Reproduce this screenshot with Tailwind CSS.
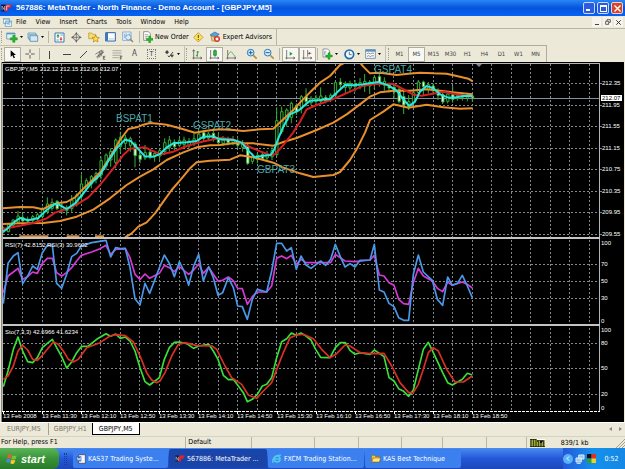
<!DOCTYPE html>
<html lang="en">
<head>
    <meta charset="UTF-8">
    <meta name="viewport" content="width=device-width, initial-scale=1.0">
    <title>567886: MetaTrader - North Finance</title>
    <script src="https://cdn.jsdelivr.net/npm/@tailwindcss/browser@4"></script>
</head>
<body class="flex min-h-screen flex-col bg-[#ece9d8] font-['DejaVu_Sans_Condensed','Liberation_Sans',sans-serif] text-[7px] leading-[10px] text-black">

    <!-- Title bar -->
    <header class="flex h-4 items-center gap-1 bg-linear-to-b from-[#2a86f5] via-[#0453dc] to-[#0564f5] pr-[2px] pl-px font-['Liberation_Sans',sans-serif]">
        <svg class="h-2 w-[11px]" viewBox="0 0 33 24"><path fill="#101038" d="M0 2h14v20H0z"/><path fill="#e02030" d="M14 2h19l-5 10h-6l-3 10h-8z"/><path stroke="#8ab" stroke-width="3" d="M3 19V6l8 13V6" fill="none"/><path stroke="#fff" stroke-width="2" d="M17 19V6h9" fill="none"/></svg>
        <h1 class="flex-1 text-[8px] font-bold text-white">567886: MetaTrader - North Finance - Demo Account - [GBPJPY,M5]</h1>
        <div class="flex gap-[2px]">
            <button aria-label="Minimize" class="flex h-3 w-3 items-end justify-start rounded-[2px] border border-[#c8d8fa] bg-[#2a5be0] p-[2px]"><span class="h-[2px] w-1 bg-white"></span></button>
            <button aria-label="Maximize" class="flex h-3 w-3 items-center justify-center rounded-[2px] border border-[#c8d8fa] bg-[#2a5be0]"><span class="h-[7px] w-[7px] border border-t-2 border-white"></span></button>
            <button aria-label="Close" class="flex h-3 w-3 items-center justify-center rounded-[2px] border border-[#f0d0c8] bg-[#d8452a]"><svg class="h-[7px] w-[7px]" viewBox="0 0 7 7"><path d="M0.5 0.5l6 6M6.5 0.5l-6 6" stroke="#fff" stroke-width="1.4"/></svg></button>
        </div>
    </header>

    <!-- Menu -->
    <nav class="flex h-[13px] items-center border-b border-[#b9b6a6] pr-[2px] pl-[3px]">
        <svg class="mr-1 h-[9px] w-[9px]" viewBox="0 0 27 27"><path fill="#fff" stroke="#4a86b8" stroke-width="2" d="M1 1h18v15H1zM7 9h19v16H7z"/><path stroke="#3aa0c8" stroke-width="2" fill="none" d="M1 4h18M7 12h19M11 20l4-3 4 3 4-3"/></svg>
        <div class="flex flex-1 gap-[9px]">
            <a href="#">File</a>
            <a href="#">View</a>
            <a href="#">Insert</a>
            <a href="#">Charts</a>
            <a href="#">Tools</a>
            <a href="#">Window</a>
            <a href="#">Help</a>
        </div>
        <div class="flex gap-[2px]">
            <button aria-label="Minimize chart" class="flex h-[10px] w-[9px] items-end justify-center bg-[#f6f4ec] pb-[2px]"><span class="h-px w-1 bg-[#444]"></span></button>
            <button aria-label="Restore chart" class="flex h-[10px] w-[9px] items-center justify-center bg-[#f6f4ec]"><svg class="h-[6px] w-[6px]" viewBox="0 0 18 18"><path fill="none" stroke="#444" stroke-width="2.5" d="M6 6V2h10v8h-4M2 7h9v9H2z"/></svg></button>
            <button aria-label="Close chart" class="flex h-[10px] w-[9px] items-center justify-center bg-[#f6f4ec]"><svg class="h-[5px] w-[5px]" viewBox="0 0 15 15"><path stroke="#333" stroke-width="3" d="M1 1l13 13M14 1L1 14"/></svg></button>
        </div>
    </nav>

    <!-- Standard toolbar -->
    <div class="flex h-4 items-center">
        <div class="flex h-4 items-center border-r border-[#b9b6a6] pr-1">
            <span class="mx-px h-3 w-[2px] border-l border-dotted border-[#999]"></span>
            <button aria-label="New chart" class="flex w-[21px] items-center justify-center gap-[2px]"><svg class="h-[11px] w-[12px]" viewBox="0 0 36 33"><path fill="#dff0f8" stroke="#4a86a8" stroke-width="2" d="M2 3h25v18H2z"/><path fill="#5a9ab8" d="M2 3h25v4H2z"/><path fill="#28b428" stroke="#0a7a14" d="M20 10h7v7h7v7h-7v7h-7v-7h-7v-7h7z"/></svg><svg class="h-[2px] w-[3px]" viewBox="0 0 6 4"><path d="M0 0h6L3 4z"/></svg></button>
            <button aria-label="Profiles" class="flex w-[21px] items-center justify-center gap-[2px]"><svg class="h-[11px] w-[12px]" viewBox="0 0 36 33"><path fill="#eaf4fa" stroke="#4a86b0" stroke-width="2" d="M3 3h23v16H3z"/><path fill="#eaf4fa" stroke="#4a86b0" stroke-width="2" d="M6 7h23v16H6z"/><path fill="#d6e8f4" stroke="#3a76a8" stroke-width="2" d="M9 11h23v17H9z"/></svg><svg class="h-[2px] w-[3px]" viewBox="0 0 6 4"><path d="M0 0h6L3 4z"/></svg></button>
            <span class="mx-[2px] h-3 w-px bg-[#b9b6a6]"></span>
            <button aria-label="Market Watch" class="flex w-[17px] justify-center"><svg class="h-[11px] w-[11px]" viewBox="0 0 33 33"><path fill="#fff" stroke="#3a78b4" stroke-width="3" d="M3 3h27v27H3z"/><path fill="#2a9a3a" d="M7 13l5-7 5 7h-3v4h-4v-4z"/><path fill="#e04030" d="M16 20l5 7 5-7h-3v-4h-4v4z"/><path stroke="#3a78b4" stroke-width="2" d="M19 9h8M7 24h8"/></svg></button>
            <button aria-label="Data window" class="flex w-[17px] justify-center"><svg class="h-[11px] w-[11px]" viewBox="0 0 33 33"><circle cx="16" cy="16" r="9" fill="none" stroke="#555" stroke-width="2"/><path fill="#555" d="M16 0l4 7h-8zM16 32l4-7h-8zM0 16l7-4v8zM32 16l-7-4v8z"/><path stroke="#555" stroke-width="2" d="M16 9v14M9 16h14"/></svg></button>
            <button aria-label="Navigator" class="flex w-[17px] justify-center"><svg class="h-[12px] w-[12px]" viewBox="0 0 36 36"><path fill="#f7dc6a" stroke="#b89030" stroke-width="2" d="M2 6h9l3 4h9v13H2z"/><path fill="#ffe050" stroke="#b07a10" stroke-width="2" d="M23 12l3 7 8 1-6 5 2 8-7-4-7 4 2-8-6-5 8-1z"/></svg></button>
            <button aria-label="Terminal" class="flex w-[17px] justify-center"><svg class="h-[10px] w-[11px]" viewBox="0 0 33 30"><path fill="#fff" stroke="#2a60a8" stroke-width="3" d="M2 2h29v25H2z"/><path fill="#3a78c0" d="M3 3h6v23H3z"/><path stroke="#a8c8e4" stroke-width="2" d="M12 20h16M12 24h16"/></svg></button>
            <button aria-label="Tester" class="flex w-[17px] justify-center"><svg class="h-[12px] w-[12px]" viewBox="0 0 36 36"><path fill="#f4f8fc" stroke="#5a90c0" stroke-width="2" d="M2 3h25v25H2z"/><path stroke="#5a90c0" stroke-width="2" d="M7 8v14M12 6v12M22 7v7"/><circle cx="19" cy="19" r="8" fill="#d8ecfa" stroke="#4a80b0" stroke-width="2"/><path stroke="#a08048" stroke-width="4" d="M25 25l8 8"/></svg></button>
            <span class="mx-[3px] h-3 w-px bg-[#b9b6a6]"></span>
            <button class="flex items-center gap-[2px]"><svg class="h-3 w-[10px]" viewBox="0 0 30 36"><path fill="#fff" stroke="#666" stroke-width="2" d="M2 2h14l6 6v20H2z"/><path stroke="#888" stroke-width="2" d="M6 11h10M6 16h10M6 21h6"/><path fill="#28b428" stroke="#0a7a14" d="M17 15h6v7h7v6h-7v7h-6v-7h-7v-6h7z"/></svg>New Order</button>
            <button aria-label="Alert" class="flex w-5 justify-center"><svg class="h-[11px] w-[11px]" viewBox="0 0 33 33"><path fill="#ffe054" stroke="#a88020" stroke-width="2" d="M16 2l14 14-14 14L2 16z"/><path stroke="#604800" stroke-width="3" d="M16 9v9M16 21v3"/></svg></button>
            <button class="flex items-center gap-[2px]"><svg class="h-3 w-3" viewBox="0 0 36 36"><path fill="#5aa4d8" stroke="#2a6a9a" stroke-width="2" d="M3 12L17 3l14 7-13 8z"/><path fill="#f0c880" stroke="#a87830" stroke-width="2" d="M6 15l12 4 6-3v14H9z"/><circle cx="24" cy="24" r="9" fill="#d83020"/><path fill="#fff" d="M20 20h8v8h-8z"/></svg>Expert Advisors</button>
        </div>
    </div>

    <!-- Line studies, charts and periods toolbar -->
    <div class="flex h-[17px] items-center">
        <div class="flex h-[17px] items-center border-t border-r border-[#c4c1b1] pr-px">
            <span class="mx-px h-3 w-[2px] border-l border-dotted border-[#999]"></span>
            <button aria-label="Cursor" class="flex h-[15px] w-[17px] items-center justify-center border border-[#b0ad9e] bg-[#f8f7f2]"><svg class="h-[9px] w-[6px]" viewBox="0 0 18 27"><path d="M2 1v20l5-5 4 9 4-2-4-8h7z"/></svg></button>
            <button aria-label="Crosshair" class="flex w-[17px] justify-center"><svg class="h-[10px] w-[10px]" viewBox="0 0 30 30"><path stroke="#444" stroke-width="2.5" d="M15 1v11M15 18v11M1 15h11M18 15h11"/></svg></button>
            <span class="mx-px h-3 w-px bg-[#b9b6a6]"></span>
            <button aria-label="Vertical line" class="flex w-[17px] justify-center"><svg class="h-[9px] w-[9px]" viewBox="0 0 9 9"><path stroke="#444" d="M4.5 1v8"/></svg></button>
            <button aria-label="Horizontal line" class="flex w-[17px] justify-center"><svg class="h-[9px] w-[9px]" viewBox="0 0 9 9"><path stroke="#444" d="M1 4.5h8"/></svg></button>
            <button aria-label="Trendline" class="flex w-[17px] justify-center"><svg class="h-[9px] w-[9px]" viewBox="0 0 9 9"><path stroke="#444" d="M1 8l7-7"/></svg></button>
            <button aria-label="Channel" class="flex w-[17px] justify-center"><svg class="h-[11px] w-[11px]" viewBox="0 0 33 33"><path stroke="#444" stroke-width="2" fill="none" d="M1 16L21 3M4 24L27 9M8 28L15 7M13 25l7-20M18 22l6-18M25 21v10M25 22h6M25 26h5M25 31h6"/></svg></button>
            <button aria-label="Fibonacci" class="flex w-[17px] justify-center"><svg class="h-[11px] w-[11px]" viewBox="0 0 33 33"><path stroke="#555" stroke-width="2" stroke-dasharray="2 1" d="M2 5h26M2 12h26M2 19h26M2 26h19"/><path stroke="#333" stroke-width="2" fill="none" d="M25 32V22h6M25 27h5"/></svg></button>
            <button class="flex w-[17px] justify-center text-[8px] text-[#444]">A</button>
            <button class="flex w-[17px] justify-center"><span class="flex h-[10px] w-[9px] items-center justify-center border border-dotted border-[#777] text-[#444]">T</span></button>
            <button aria-label="Arrows" class="flex w-[23px] items-center justify-center gap-[2px]"><svg class="h-[10px] w-[11px]" viewBox="0 0 33 30"><path fill="#444" d="M9 3l6 7-6 6-6-6z"/><path fill="#444" d="M18 17h12l-6 9z"/><path fill="none" stroke="#444" stroke-width="3" d="M12 20l3 4 12-15"/></svg><svg class="h-[2px] w-[3px]" viewBox="0 0 6 4"><path d="M0 0h6L3 4z"/></svg></button>
        </div>
        <div class="flex h-[17px] items-center border-t border-r border-[#c4c1b1] pr-px">
            <span class="mx-px h-3 w-[2px] border-l border-dotted border-[#999]"></span>
            <button aria-label="Bar chart" class="flex w-[17px] justify-center"><svg class="h-[11px] w-[11px]" viewBox="0 0 33 33"><path stroke="#444" stroke-width="2" fill="none" d="M5 3v28M1 27h28M25 24l5 3-5 3M2 7l3-5 3 5"/><path stroke="#2a9a3a" stroke-width="3" fill="none" d="M16 6v17M12 20h4M16 9h5"/></svg></button>
            <button aria-label="Candlesticks" class="flex h-[15px] w-[17px] items-center justify-center border border-[#b0ad9e] bg-[#f8f7f2]"><svg class="h-[11px] w-[11px]" viewBox="0 0 33 33"><path stroke="#444" stroke-width="2" fill="none" d="M5 3v28M1 27h28M25 24l5 3-5 3"/><path stroke="#107020" stroke-width="2" d="M18 1v24"/><path fill="#2ac040" stroke="#107020" stroke-width="2" d="M14 5h8v14h-8z"/></svg></button>
            <button aria-label="Line chart" class="flex w-[17px] justify-center"><svg class="h-[11px] w-[11px]" viewBox="0 0 33 33"><path stroke="#444" stroke-width="2" fill="none" d="M5 3v28M1 27h28M25 24l5 3-5 3"/><path stroke="#2a9a3a" stroke-width="2" fill="none" d="M6 19C12 6 16 6 20 13s5 8 9 9"/></svg></button>
            <span class="w-[3px]"></span>
            <button aria-label="Zoom in" class="flex w-[17px] justify-center"><svg class="h-[12px] w-[12px]" viewBox="0 0 36 36"><path stroke="#c09030" stroke-width="5" d="M22 22l10 10"/><circle cx="14" cy="14" r="10" fill="#d4ecfc" stroke="#2a78b8" stroke-width="3"/><path stroke="#1a60a0" stroke-width="3" d="M14 8v12M8 14h12"/></svg></button>
            <button aria-label="Zoom out" class="flex w-[17px] justify-center"><svg class="h-[12px] w-[12px]" viewBox="0 0 36 36"><path stroke="#c09030" stroke-width="5" d="M22 22l10 10"/><circle cx="14" cy="14" r="10" fill="#d4ecfc" stroke="#2a78b8" stroke-width="3"/><path stroke="#1a60a0" stroke-width="3" d="M8 14h12"/></svg></button>
            <span class="mx-[2px] h-3 w-px bg-[#b9b6a6]"></span>
            <button aria-label="Auto scroll" class="flex h-[15px] w-[17px] items-center justify-center border border-[#b0ad9e] bg-[#f8f7f2]"><svg class="h-[11px] w-[11px]" viewBox="0 0 33 33"><path stroke="#444" stroke-width="2" fill="none" d="M5 3v28M1 27h28M25 24l5 3-5 3"/><path fill="#2a9a3a" d="M14 8l9 6-9 6z"/></svg></button>
            <button aria-label="Chart shift" class="flex h-[15px] w-[17px] items-center justify-center border border-[#b0ad9e] bg-[#f8f7f2]"><svg class="h-[11px] w-[11px]" viewBox="0 0 33 33"><path stroke="#444" stroke-width="2" fill="none" d="M5 3v28M1 27h28M25 24l5 3-5 3M17 3v20M19 13h9"/><path fill="#b03020" d="M18 13l6-4v8z"/></svg></button>
            <span class="mx-px h-3 w-px bg-[#b9b6a6]"></span>
            <button aria-label="Indicators" class="flex w-[22px] items-center justify-center gap-[2px]"><svg class="h-[12px] w-[11px]" viewBox="0 0 33 36"><path fill="#fff" stroke="#666" stroke-width="2" d="M3 3h14l6 6v18H3z"/><path stroke="#5a90c0" stroke-width="2" fill="none" d="M8 22V10h5M7 15h6"/><path fill="#28b428" stroke="#0a7a14" d="M18 14h6v7h7v6h-7v7h-6v-7h-7v-6h7z"/></svg><svg class="h-[2px] w-[3px]" viewBox="0 0 6 4"><path d="M0 0h6L3 4z"/></svg></button>
            <button aria-label="Periods" class="flex w-[21px] items-center justify-center gap-[2px]"><svg class="h-[11px] w-[11px]" viewBox="0 0 33 33"><circle cx="16" cy="16" r="13" fill="#eef8ff" stroke="#2068a8" stroke-width="5"/><path stroke="#234" stroke-width="2" fill="none" d="M16 8v9h7"/></svg><svg class="h-[2px] w-[3px]" viewBox="0 0 6 4"><path d="M0 0h6L3 4z"/></svg></button>
            <button aria-label="Templates" class="flex w-[22px] items-center justify-center gap-[2px]"><svg class="h-[10px] w-[11px]" viewBox="0 0 33 30"><path fill="#fff" stroke="#3a6a98" stroke-width="2" d="M2 2h29v26H2z"/><path fill="#5a90c0" d="M2 2h29v6H2z"/><path stroke="#555" stroke-width="2" fill="none" d="M6 14l5-2 5 3 5-3 6 1M6 22l5-2 5 3 5-3 6 1"/></svg><svg class="h-[2px] w-[3px]" viewBox="0 0 6 4"><path d="M0 0h6L3 4z"/></svg></button>
        </div>
        <div class="flex h-[17px] items-center border-t border-r border-[#b0ad9e] pr-[2px] pl-px text-[6px] text-[#444]">
            <span class="mx-px h-3 w-[2px] border-l border-dotted border-[#999]"></span>
            <button class="w-[17px]">M1</button>
            <button class="h-[15px] w-[17px] border border-[#b0ad9e] bg-[#f8f7f2]">M5</button>
            <button class="w-[17px]">M15</button>
            <button class="w-[17px]">M30</button>
            <button class="w-[17px]">H1</button>
            <button class="w-[17px]">H4</button>
            <button class="w-[17px]">D1</button>
            <button class="w-[17px]">W1</button>
            <button class="w-[17px]">MN</button>
        </div>
    </div>

    <!-- Chart window: price, RSI and stochastic -->
    <main class="border-b border-[#fff]">
        <svg class="block w-full" viewBox="0 62 625 360" font-family="'Liberation Sans',sans-serif" font-size="6" fill="#fff">
            <path fill="#8e8c80" d="M0 62h625v360H0z"/>
            <path fill="#ece9d8" d="M0 62h1v360H0zM624 62h1v360h-1z"/>
            <path fill="#000" d="M2 62h622v360H2z"/>
            <g id="grid" stroke="#808890" stroke-dasharray="2 2" shape-rendering="crispEdges"></g>
            <path stroke="#8090a0" d="M3 98.5h597"/>

            <svg x="0" y="60" width="625" height="180" viewBox="0 0 1875 540" fill="none" stroke-linejoin="round">
                <g id="candles" stroke="#35b135" stroke-width="3"></g>
                <g id="price" stroke-width="6"></g>
            </svg>
            <svg x="0" y="236" width="625" height="186" viewBox="0 0 1875 558" fill="none" stroke-linejoin="round">
                <g id="oscillators" stroke-width="5"></g>
            </svg>

            <path fill="#000" d="M2 62h622v1H2z"/>
            <path fill="none" stroke="#b4b4b4" shape-rendering="crispEdges" d="M2.5 63.5H600M2.5 63v349M599.5 63v349"/>
            <path fill="#c4c4c4" d="M2 237h598v2H2zM2 324h598v2H2z"/>
            <path fill="none" stroke="#fff" stroke-dasharray="3 1" shape-rendering="crispEdges" d="M2 411.5h598"/>
            <path fill="#808890" d="M476 64h6l-3 3z"/>

            <g font-size="10" fill="#4aa8a8">
                <text x="116" y="122">BSPAT1</text>
                <text x="193" y="129">GSPAT2</text>
                <text x="257" y="173">GBPAT3</text>
                <text x="374" y="73">GSPAT4</text>
            </g>
            <text x="5" y="71">GBPJPY,M5</text>
            <text x="40" y="71">212.12 212.15 212.06 212.07</text>
            <text x="5" y="247">RSI(7) 42.8152</text>
            <text x="47" y="247">RSI(3) 30.9602</text>
            <text x="5" y="334">Sto(7,3,3) 42.6966 41.6234</text>
            <g id="labels"></g>
            <path d="M601 95h21v6h-21z"/>
            <text x="602" y="100" fill="#000">212.07</text>
        </svg>
    </main>

    <!-- Chart tabs -->
    <div class="flex h-[13px] items-start text-[#77756a]">
        <button class="h-3 border-r border-[#a5a294] px-[7px] leading-[10px]">EURJPY,M5</button>
        <button class="h-3 px-[5px] leading-[10px]">GBPJPY,H1</button>
        <button class="h-3 border border-t-0 border-black bg-white px-[6px] leading-[10px] text-black">GBPJPY,M5</button>
        <span class="flex-1"></span>
        <button aria-label="Scroll tabs left" class="h-3 w-[10px]"><svg class="mx-auto h-[4px] w-[3px]" viewBox="0 0 3 4"><path fill="#888" d="M3 0v4L0 2z"/></svg></button>
        <button aria-label="Scroll tabs right" class="h-3 w-[10px]"><svg class="mx-auto h-[4px] w-[3px]" viewBox="0 0 3 4"><path fill="#888" d="M0 0v4l3-2z"/></svg></button>
    </div>

    <!-- Status bar -->
    <footer class="grid h-3 grid-cols-[185fr_66fr_62fr_44fr_43fr_41fr_44fr_40fr_99fr] border-t border-[#d6d3c3] leading-[10px] whitespace-nowrap">
        <span class="pl-px">For Help, press F1</span>
        <span class="border-l border-[#b9b6a6] pl-[2px]">Default</span>
        <span class="border-l border-[#b9b6a6]"></span>
        <span class="border-l border-[#b9b6a6]"></span>
        <span class="border-l border-[#b9b6a6]"></span>
        <span class="border-l border-[#b9b6a6]"></span>
        <span class="border-l border-[#b9b6a6]"></span>
        <span class="border-l border-[#b9b6a6]"></span>
        <span class="flex items-center border-l border-[#b9b6a6] pl-[3px]">
            <svg class="h-2 w-[15px]" viewBox="0 0 45 24"><path fill="#111" d="M0 0h45v24H0z"/><path stroke="#b8c83c" stroke-width="3" d="M3 2v20M8 2v20M13 2v20M18 2v20M23 8v14M28 5v17M33 12v10M38 8v14M43 3v19"/><path stroke="#fff" stroke-width="5" d="M20 1h25"/></svg>
            <span class="ml-4 flex-1">839/1 kb</span>
            <svg class="h-[9px] w-[9px] self-end" viewBox="0 0 9 9"><path stroke="#a5a294" d="M0 9l9-9M3 9l6-6M6 9l3-3"/></svg>
        </span>
    </footer>

    <!-- Windows taskbar -->
    <div class="flex min-h-[21px] flex-1 items-stretch bg-linear-to-b from-[#4a8cf0] via-[#2458d8] to-[#1c48b8] text-white">
        <button class="mr-[5px] flex w-[59px] items-center gap-[3px] rounded-r-[6px] bg-linear-to-b from-[#5cb45a] via-[#379335] to-[#2b7a2b] pl-[6px] font-['Liberation_Sans',sans-serif] text-[11px] font-bold italic">
            <svg class="h-3 w-3" viewBox="0 0 36 36"><path fill="#f05a28" d="M6 6q6-4 11 0l-3 11q-5-4-11 0z"/><path fill="#7ac043" d="M19 7q6 4 13 0l-3 11q-7 3-13 0z"/><path fill="#3a8ee8" d="M3 19q5-4 11 0l-3 11q-5-4-11 0z"/><path fill="#ffc828" d="M16 20q6 4 12 0l-3 11q-6 4-12 0z"/></svg>
            start
        </button>
        <span class="mr-[6px] h-3 w-[3px] self-center border-x border-dotted border-[#1a3c98]"></span>
        <div class="flex flex-1 gap-px py-px">
            <button class="flex w-[95px] items-center gap-[2px] rounded-[2px] bg-[#3c80f0] pl-[3px]"><svg class="h-[10px] w-[10px]" viewBox="0 0 30 30"><path fill="#f4f6fc" stroke="#334" stroke-width="2" d="M8 2h20v26H8z"/><path fill="#3060b8" d="M1 7h15v15H1z"/><path stroke="#fff" stroke-width="2" fill="none" d="M4 10l2 9 3-7 3 7 2-9"/></svg>KAS37 Trading Syste...</button>
            <button class="flex w-[98px] items-center gap-[2px] rounded-[2px] bg-[#1a44a8] pl-[6px]"><svg class="h-[7px] w-[10px]" viewBox="0 0 33 24"><path fill="#101038" d="M0 2h14v20H0z"/><path fill="#e02030" d="M14 2h19l-5 10h-6l-3 10h-8z"/><path stroke="#8ab" stroke-width="3" d="M3 19V6l8 13V6" fill="none"/></svg>567886: MetaTrader ...</button>
            <button class="flex w-24 items-center gap-[2px] rounded-[2px] bg-[#3c80f0] pl-1"><svg class="h-[10px] w-[10px]" viewBox="0 0 30 30"><circle cx="15" cy="15" r="9" fill="none" stroke="#50c8e8" stroke-width="5"/><path stroke="#50c8e8" stroke-width="4" fill="none" d="M6 15h18M3 26C-2 14 14 2 27 4"/></svg>FXCM Trading Station...</button>
            <button class="flex w-24 items-center gap-[2px] rounded-[2px] bg-[#3c80f0] pl-[6px]"><svg class="h-[9px] w-[10px]" viewBox="0 0 30 27"><path fill="#f0c850" stroke="#8a6a10" stroke-width="2" d="M2 4h9l3 4h12v16H2z"/><path fill="#ffe890" stroke="#8a6a10" stroke-width="2" d="M7 12h22l-4 12H2z"/></svg>KAS Best Technique</button>
        </div>
        <div class="flex w-[62px] items-center gap-[2px] bg-linear-to-r from-[#2458d8] via-[#1490ec] to-[#1488e4]">
            <button aria-label="Show hidden icons" class="flex h-[10px] w-[10px] items-center justify-center rounded-full bg-[#58b0f8]"><svg class="h-[5px] w-[4px]" viewBox="0 0 4 5"><path fill="none" stroke="#fff" d="M3 0.5L1 2.5l2 2"/></svg></button>
            <svg class="h-[10px] w-[10px]" viewBox="0 0 30 30"><path fill="#90c8f4" stroke="#dfe8f4" stroke-width="3" d="M11 3h16v12H11zM3 12h16v12H3z"/><path stroke="#dfe8f4" stroke-width="3" d="M5 28h12"/></svg>
            <svg class="h-[9px] w-[9px]" viewBox="0 0 18 18"><path fill="#111" d="M0 0h9v9H0z"/><path fill="#e03020" d="M9 0h9v9H9z"/><path fill="#30a030" d="M0 9h9v9H0z"/><path fill="#f0d020" d="M9 9h9v9H9z"/></svg>
            <span class="flex-1 text-center">0:52</span>
        </div>
    </div>

    <script>
        const NS = 'http://www.w3.org/2000/svg';

        function add(parent, name, attrs, text) {
            const el = document.createElementNS(NS, name);
            for (const key in attrs) el.setAttribute(key, attrs[key]);
            if (text) el.textContent = text;
            document.getElementById(parent).appendChild(el);
        }

        // Grid
        for (let i = 1; i <= 30; i++) {
            const x = Math.floor(3.2 + i * 19.54) + 0.5;
            add('grid', 'path', { d: `M${x} 64V411` });
        }
        [83, 105, 126, 148, 169, 191, 212, 234, 264, 281, 298, 343, 368, 394].forEach(y => {
            add('grid', 'path', { d: `M3 ${y + 0.5}H600` });
        });

        // Axis labels
        const priceScale = { '212.35': 83, '211.95': 105, '211.55': 126, '211.15': 148, '210.75': 169, '210.35': 191, '209.95': 212, '209.55': 234 };
        for (const price in priceScale) {
            add('grid', 'path', { d: `M600 ${priceScale[price] + 0.5}h2`, 'stroke-dasharray': 'none' });
            add('labels', 'text', { x: 602, y: priceScale[price] + 2 }, price);
        }
        [['100', 245], ['70', 266], ['50', 283], ['30', 300], ['0', 323], ['100', 332], ['80', 345], ['50', 370], ['20', 396], ['0', 410]].forEach(([label, y]) => {
            add('labels', 'text', { x: 601, y: y }, label);
        });
        ['2008', '11:30', '12:10', '12:50', '13:30', '14:10', '14:50', '15:30', '16:10', '16:50', '17:30', '18:10', '18:50'].forEach((time, i) => {
            const x = Math.round(3 + i * 39.08);
            add('labels', 'path', { d: `M${x} 411h1v3h-1z` });
            add('labels', 'text', { x: x, y: 418 }, '13 Feb ' + time);
        });

        // Candles: x, high, low, body top, body bottom, falling
        const candles = [
            [10, 500, 520, 505, 516, 0], [25, 490, 517, 494, 515, 0], [39, 478, 500, 480, 496, 0], [54, 453, 490, 468, 486, 0], [68, 460, 486, 472, 483, 1],
            [83, 470, 488, 478, 484, 0], [98, 465, 490, 470, 482, 0], [112, 458, 485, 464, 478, 0], [127, 440, 476, 446, 470, 0], [142, 412, 462, 432, 455, 0],
            [156, 415, 452, 427, 445, 0], [171, 420, 450, 424, 446, 1], [186, 430, 460, 440, 450, 0], [200, 436, 466, 444, 452, 0], [215, 405, 455, 420, 446, 0],
            [230, 400, 440, 405, 430, 0], [244, 343, 420, 372, 410, 0], [259, 355, 395, 362, 385, 0], [274, 345, 385, 350, 372, 0], [288, 335, 370, 340, 358, 0],
            [303, 290, 358, 302, 345, 0], [318, 280, 330, 285, 318, 0], [332, 265, 320, 275, 300, 0], [347, 235, 325, 240, 308, 0], [361, 215, 280, 232, 260, 0],
            [376, 225, 270, 234, 250, 0], [391, 230, 275, 236, 256, 0], [405, 245, 322, 252, 287, 1], [420, 270, 310, 285, 298, 1], [435, 255, 300, 278, 294, 0],
            [450, 270, 298, 276, 292, 1], [464, 272, 305, 280, 290, 0], [479, 265, 300, 272, 288, 0], [494, 235, 285, 248, 275, 0], [508, 228, 275, 240, 262, 0],
            [523, 238, 270, 246, 260, 1], [538, 232, 262, 242, 256, 0], [552, 230, 262, 240, 254, 0], [567, 234, 265, 244, 258, 0], [582, 220, 258, 236, 250, 0],
            [596, 205, 250, 222, 240, 0], [611, 210, 245, 218, 236, 1], [625, 216, 240, 222, 234, 0], [640, 205, 245, 220, 236, 1], [655, 220, 256, 238, 248, 1],
            [669, 228, 258, 240, 250, 0], [684, 230, 256, 238, 248, 1], [699, 228, 256, 238, 248, 0], [713, 235, 265, 244, 256, 1], [728, 240, 275, 250, 262, 0],
            [743, 250, 315, 258, 310, 1], [757, 280, 312, 290, 304, 0], [772, 278, 310, 286, 298, 0], [787, 275, 300, 284, 296, 1], [801, 272, 305, 282, 294, 0],
            [816, 262, 300, 272, 290, 0], [830, 142, 290, 182, 284, 0], [845, 140, 222, 155, 215, 0], [860, 145, 200, 150, 182, 0], [874, 125, 190, 130, 172, 0],
            [889, 130, 165, 138, 156, 1], [904, 105, 160, 110, 145, 0], [918, 85, 140, 110, 125, 1], [933, 108, 135, 115, 128, 0], [948, 105, 135, 114, 124, 0],
            [962, 82, 130, 108, 124, 0], [977, 105, 130, 112, 122, 1], [992, 100, 126, 106, 118, 0], [1006, 64, 115, 68, 106, 0], [1021, 54, 90, 66, 74, 1],
            [1036, 64, 100, 70, 82, 0], [1050, 62, 98, 70, 84, 0], [1065, 60, 95, 72, 80, 0], [1080, 54, 88, 68, 80, 0], [1094, 42, 96, 64, 78, 0],
            [1109, 60, 102, 66, 78, 0], [1123, 45, 88, 52, 72, 0], [1138, 40, 80, 50, 68, 1], [1153, 52, 92, 64, 76, 0], [1167, 68, 98, 74, 84, 1],
            [1182, 72, 115, 82, 96, 1], [1197, 82, 130, 88, 124, 1], [1211, 90, 162, 110, 135, 1], [1226, 105, 150, 125, 140, 0], [1240, 90, 135, 98, 128, 0],
            [1255, 60, 110, 66, 98, 0], [1270, 62, 105, 66, 80, 1], [1285, 66, 100, 74, 88, 0], [1299, 70, 104, 78, 92, 1], [1314, 85, 120, 92, 106, 1],
            [1328, 96, 132, 104, 126, 1], [1343, 96, 130, 102, 124, 0], [1358, 78, 128, 104, 118, 1], [1372, 98, 122, 106, 116, 0], [1387, 96, 122, 104, 112, 0],
            [1402, 98, 124, 104, 114, 0], [1417, 100, 126, 108, 116, 1]
        ];
        candles.forEach(([x, high, low, top, bottom, falling]) => {
            add('candles', 'path', { d: `M${x} ${high}V${low}` });
            add('candles', 'rect', { x: x - 3, y: top, width: 7, height: bottom - top, fill: falling ? '#f4fff0' : '#000' });
        });

        // Bands and moving averages
        const price = [
            ['#e8902c', '8,445 60,441 100,442 128,448 150,436 170,430 200,426 225,412 250,386 275,362 302,335 330,292 360,240 385,207 410,202 430,194 450,189 475,191 500,194 540,205 585,218 610,214 630,211 660,208 700,210 730,213 780,208 820,206 850,178 880,150 900,128 930,97 960,68 990,48 1020,15 1035,8 1080,8 1090,20 1110,40 1140,38 1190,45 1225,41 1260,38 1300,40 1340,41 1380,50 1405,56 1418,64'],
            ['#e8902c', '8,492 60,490 130,489 180,483 230,470 280,449 330,415 380,375 420,350 460,328 500,300 550,277 590,262 630,256 660,255 700,250 760,250 820,257 850,246 890,234 950,210 1000,188 1040,163 1080,133 1110,110 1140,97 1180,92 1230,92 1280,88 1320,92 1370,98 1418,103'],
            ['#e8902c', '375,532 395,520 415,500 440,487 465,460 490,425 515,390 545,355 570,325 590,307 630,302 690,299 720,286 760,292 790,300 820,308 850,323 900,340 940,351 1000,345 1020,336 1050,300 1070,268 1095,218 1110,180 1150,155 1180,133 1200,137 1225,143 1280,134 1330,142 1380,146 1418,145'],
            ['#e8902c', '58,529 145,529'], ['#e8902c', '200,529 238,529'], ['#e8902c', '285,529 312,529'],
            ['#d42020', '8,507 60,497 100,489 140,475 165,458 200,447 230,434 265,412 300,375 340,325 370,285 390,266 435,262 455,272 485,283 520,275 560,258 600,247 630,240 660,234 700,238 740,257 780,274 810,285 825,283 850,255 880,217 900,185 920,148 950,135 1000,117 1050,95 1090,77 1130,72 1180,72 1200,82 1240,104 1265,107 1290,103 1330,95 1370,103 1418,110'],
            ['#28e8e0', '8,515 20,508 40,488 60,474 85,481 115,474 140,450 165,432 175,433 200,447 225,430 250,400 275,368 300,345 330,295 350,265 375,239 392,243 410,262 435,289 460,290 480,282 500,262 520,250 560,247 590,243 610,230 640,229 660,238 700,240 725,248 745,272 765,292 790,287 812,285 822,270 835,235 850,200 870,163 895,152 930,122 960,120 990,117 1010,98 1035,75 1060,76 1090,73 1135,66 1165,76 1190,92 1210,118 1228,138 1245,125 1260,95 1280,78 1300,85 1320,103 1345,113 1370,112 1390,108 1418,108']
        ];
        price.forEach(([stroke, points]) => add('price', 'polyline', { stroke, points }));

        // RSI(7), RSI(3), stochastic main and signal
        const oscillators = [
            ['#d838d8', '10,170 24,120 40,108 54,97 68,130 83,122 98,108 112,112 127,82 142,67 157,67 170,110 185,120 200,110 215,95 230,75 244,58 275,48 300,38 318,28 332,55 347,40 376,38 390,65 405,115 420,130 435,114 449,127 478,112 493,88 508,95 523,107 538,92 566,115 581,102 596,84 610,112 626,94 640,115 654,135 668,133 685,123 700,134 713,157 727,158 742,205 757,182 772,168 800,168 815,150 830,67 845,60 860,68 874,58 889,85 903,70 918,80 992,80 1006,55 1035,75 1065,77 1110,72 1123,58 1138,117 1152,120 1167,140 1182,148 1196,190 1211,203 1226,205 1240,140 1255,97 1270,120 1297,135 1312,157 1328,167 1343,138 1357,148 1387,138 1402,145 1417,156'],
            ['#4a98e8', '10,203 24,82 40,60 54,50 68,143 83,120 98,90 112,100 127,50 142,28 157,28 170,142 185,157 200,115 215,62 230,52 244,30 275,20 318,13 332,63 347,35 361,38 376,37 390,95 405,188 420,207 435,142 449,172 465,130 478,95 493,57 508,82 523,122 538,77 552,105 566,148 581,90 596,55 610,135 626,92 640,125 654,178 668,170 685,125 700,155 713,210 727,212 742,250 757,190 772,160 800,168 815,105 830,22 845,22 860,45 874,35 889,100 903,60 918,87 933,97 962,75 977,88 992,70 1006,25 1021,62 1035,93 1050,83 1065,93 1080,73 1110,72 1123,25 1138,162 1152,168 1167,202 1182,212 1196,245 1211,253 1226,253 1240,115 1255,57 1270,108 1297,133 1312,190 1328,208 1343,123 1357,148 1372,142 1387,118 1402,150 1417,185'],
            ['#38e038', '10,452 24,405 40,340 54,303 68,345 83,377 98,380 112,365 127,335 142,322 157,310 170,335 185,362 200,396 215,378 230,350 244,332 265,330 290,310 318,293 332,301 347,294 361,307 376,303 390,315 405,345 420,395 435,437 449,447 465,435 478,425 493,370 508,335 523,319 538,318 560,323 581,337 596,330 626,325 640,345 654,370 670,418 685,431 700,430 715,450 730,470 742,497 757,490 772,475 787,450 800,445 815,425 830,365 845,317 860,308 874,291 889,298 903,291 918,300 933,312 947,340 962,364 990,365 1006,335 1021,320 1036,320 1050,343 1065,355 1080,350 1110,355 1123,342 1138,352 1152,362 1167,425 1182,435 1196,458 1211,466 1226,481 1240,462 1255,400 1270,340 1285,319 1300,350 1328,410 1343,440 1357,447 1387,430 1402,412 1417,417'],
            ['#dc3024', '10,430 24,420 40,390 54,345 68,328 83,342 98,370 112,373 127,358 142,340 160,318 175,325 190,345 205,370 220,378 235,370 260,335 300,320 330,300 347,296 376,299 400,318 420,360 440,410 455,432 470,440 480,435 495,410 515,360 535,325 555,320 590,329 636,330 650,340 675,390 695,425 725,445 745,477 770,487 790,465 815,440 830,400 850,350 870,305 890,297 910,295 940,308 965,340 990,365 1010,353 1035,327 1050,330 1080,350 1110,353 1152,352 1175,390 1200,440 1226,470 1240,470 1255,445 1270,400 1285,350 1300,335 1315,345 1340,400 1365,438 1390,438 1417,420']
        ];
        oscillators.forEach(([stroke, points]) => add('oscillators', 'polyline', { stroke, points }));
    </script>
</body>
</html>
